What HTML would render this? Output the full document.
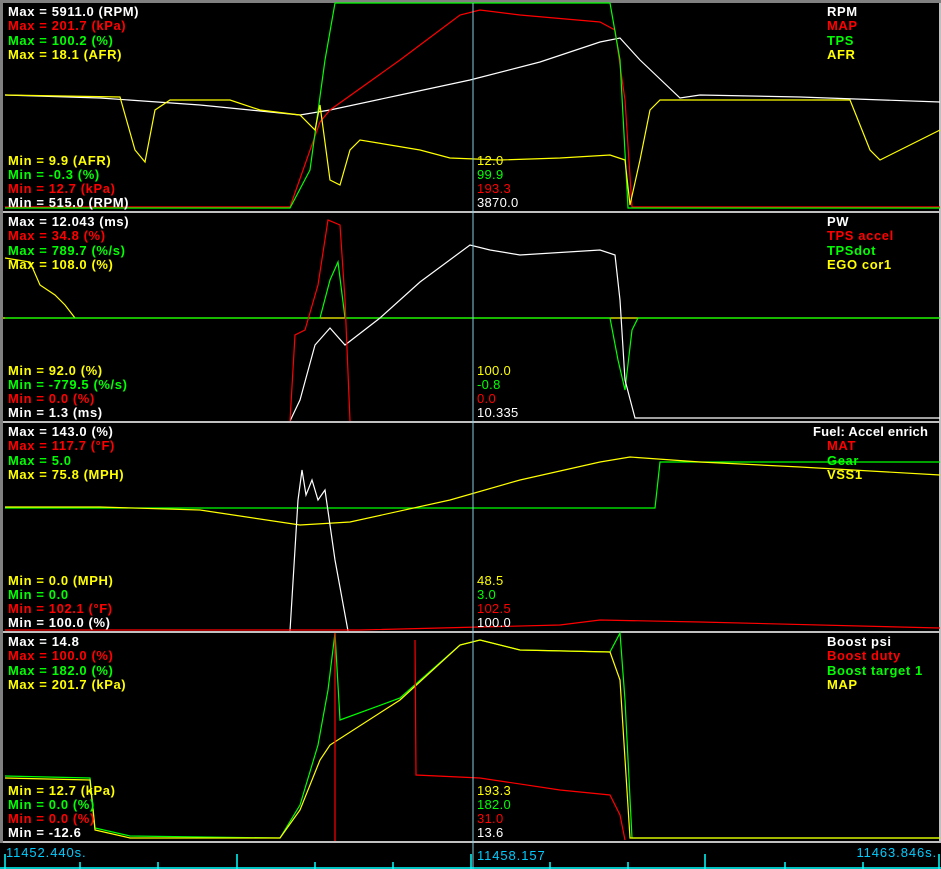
<!DOCTYPE html><html><head><style>
body{margin:0;background:#000;width:941px;height:869px;overflow:hidden}
svg{display:block}
text{font-family:"Liberation Sans",sans-serif;font-size:13px;letter-spacing:0.3px}
.b{font-weight:bold;letter-spacing:0.6px}
.ax{letter-spacing:0.9px}
</style></head><body>
<svg width="941" height="869" xmlns="http://www.w3.org/2000/svg">
<rect width="941" height="869" fill="#000"/>
<rect x="0" y="0" width="941" height="3" fill="#808080"/>
<rect x="0" y="0" width="3" height="843" fill="#808080"/>
<rect x="939" y="3" width="2" height="840" fill="#c0c0c0"/>
<g fill="#c0c0c0"><rect x="3" y="211" width="936" height="2"/><rect x="3" y="421" width="936" height="2"/><rect x="3" y="631" width="936" height="2"/><rect x="3" y="841" width="936" height="2"/></g>
<g fill="none" stroke-width="1.2">
<polyline stroke="#fff" points="5,95 100,98 200,105 300,115 330,110 400,95 470,80 540,62 600,42 620,38 640,60 680,98 700,95 800,97 940,102"/>
<polyline stroke="#f00" points="5,207 290,207 320,122 330,110 400,60 440,30 460,15 480,10 520,15 600,22 615,30 625,100 632,207 940,207"/>
<polyline stroke="#0f0" points="5,208 290,208 310,170 325,60 335,3 610,3 620,60 628,208 940,208"/>
<polyline stroke="#ff0" points="5,95 120,97 135,150 145,162 155,110 170,100 230,100 260,110 300,115 315,130 320,105 330,180 340,185 350,150 360,140 390,145 420,150 450,158 500,160 560,158 610,155 625,160 630,205 640,160 650,110 660,100 850,100 870,150 880,160 900,150 930,135 940,130"/>
<line stroke="#ff0" x1="3" y1="318" x2="939" y2="318"/>
<polyline stroke="#ff0" points="5,258 30,262 40,285 55,295 65,305 75,318"/>
<polyline stroke="#0f0" points="5,318 320,318 330,280 338,262 345,318 610,318 618,360 625,390 632,330 638,318 940,318"/>
<polyline stroke="#fff" points="290,421 300,400 315,345 330,328 345,345 380,318 420,282 470,245 490,250 520,255 600,250 615,255 620,300 625,380 635,418 940,418"/>
<polyline stroke="#f00" points="290,421 295,335 305,330 318,285 328,220 340,225 345,300 350,421"/>
<polyline stroke="#0f0" points="5,508 655,508 660,462 940,462"/>
<polyline stroke="#ff0" points="5,507 100,507 200,510 300,525 350,522 450,500 520,480 600,462 630,457 700,462 800,467 940,475"/>
<polyline stroke="#fff" points="290,631 298,500 302,470 306,495 312,480 318,500 325,490 335,560 348,631"/>
<polyline stroke="#f00" points="5,630 360,630 560,625 600,620 700,622 940,628"/>
<polyline stroke="#0f0" points="5,776 90,778 95,828 130,836 280,838 300,805 318,745 328,690 335,633 340,720 400,698 460,645 480,640 520,650 610,652 620,633 625,700 632,838 940,838"/>
<polyline stroke="#ff0" points="5,778 90,780 95,830 130,838 280,838 300,810 320,760 330,745 400,700 460,645 480,640 520,650 610,652 620,680 630,838 940,838"/>
<polyline stroke="#f00" points="335,633 335,841"/>
<polyline stroke="#f00" points="415,640 416,775 480,778 560,790 610,795 620,815 625,840"/>
</g>
<line x1="473" y1="3" x2="473" y2="869" stroke="#8cd" stroke-width="1"/>
<g stroke="#0ff" stroke-width="1.5">
<line x1="0" y1="868" x2="941" y2="868"/>
<line x1="5" y1="854" x2="5" y2="869"/><line x1="237" y1="854" x2="237" y2="869"/><line x1="471" y1="854" x2="471" y2="869"/><line x1="705" y1="854" x2="705" y2="869"/><line x1="939" y1="854" x2="939" y2="869"/>
<line x1="80" y1="862" x2="80" y2="869"/><line x1="158" y1="862" x2="158" y2="869"/><line x1="315" y1="862" x2="315" y2="869"/><line x1="393" y1="862" x2="393" y2="869"/><line x1="550" y1="862" x2="550" y2="869"/><line x1="628" y1="862" x2="628" y2="869"/><line x1="785" y1="862" x2="785" y2="869"/><line x1="863" y1="862" x2="863" y2="869"/>
</g>
<g fill="#0cf"><text class="ax" x="6" y="857">11452.440s.</text><text class="ax" x="477" y="860">11458.157</text><text class="ax" x="937" y="857" text-anchor="end">11463.846s.</text></g>
<g>
<text class="b" x="8" y="16" fill="#fff">Max = 5911.0 (RPM)</text>
<text class="b" x="8" y="30" fill="#f00">Max = 201.7 (kPa)</text>
<text class="b" x="8" y="45" fill="#0f0">Max = 100.2 (%)</text>
<text class="b" x="8" y="59" fill="#ff0">Max = 18.1 (AFR)</text>
<text class="b" x="8" y="165" fill="#ff0">Min = 9.9 (AFR)</text>
<text class="b" x="8" y="179" fill="#0f0">Min = -0.3 (%)</text>
<text class="b" x="8" y="193" fill="#f00">Min = 12.7 (kPa)</text>
<text class="b" x="8" y="207" fill="#fff">Min = 515.0 (RPM)</text>
<text class="b" x="827" y="16" fill="#fff">RPM</text>
<text class="b" x="827" y="30" fill="#f00">MAP</text>
<text class="b" x="827" y="45" fill="#0f0">TPS</text>
<text class="b" x="827" y="59" fill="#ff0">AFR</text>
<text class="b" x="8" y="226" fill="#fff">Max = 12.043 (ms)</text>
<text class="b" x="8" y="240" fill="#f00">Max = 34.8 (%)</text>
<text class="b" x="8" y="255" fill="#0f0">Max = 789.7 (%/s)</text>
<text class="b" x="8" y="269" fill="#ff0">Max = 108.0 (%)</text>
<text class="b" x="8" y="375" fill="#ff0">Min = 92.0 (%)</text>
<text class="b" x="8" y="389" fill="#0f0">Min = -779.5 (%/s)</text>
<text class="b" x="8" y="403" fill="#f00">Min = 0.0 (%)</text>
<text class="b" x="8" y="417" fill="#fff">Min = 1.3 (ms)</text>
<text class="b" x="827" y="226" fill="#fff">PW</text>
<text class="b" x="827" y="240" fill="#f00">TPS accel</text>
<text class="b" x="827" y="255" fill="#0f0">TPSdot</text>
<text class="b" x="827" y="269" fill="#ff0">EGO cor1</text>
<text class="b" x="8" y="436" fill="#fff">Max = 143.0 (%)</text>
<text class="b" x="8" y="450" fill="#f00">Max = 117.7 (°F)</text>
<text class="b" x="8" y="465" fill="#0f0">Max = 5.0</text>
<text class="b" x="8" y="479" fill="#ff0">Max = 75.8 (MPH)</text>
<text class="b" x="8" y="585" fill="#ff0">Min = 0.0 (MPH)</text>
<text class="b" x="8" y="599" fill="#0f0">Min = 0.0</text>
<text class="b" x="8" y="613" fill="#f00">Min = 102.1 (°F)</text>
<text class="b" x="8" y="627" fill="#fff">Min = 100.0 (%)</text>
<text class="b" x="813" y="436" fill="#fff" style="letter-spacing:0.2px">Fuel: Accel enrich</text>
<text class="b" x="827" y="450" fill="#f00">MAT</text>
<text class="b" x="827" y="465" fill="#0f0">Gear</text>
<text class="b" x="827" y="479" fill="#ff0">VSS1</text>
<text class="b" x="8" y="646" fill="#fff">Max = 14.8</text>
<text class="b" x="8" y="660" fill="#f00">Max = 100.0 (%)</text>
<text class="b" x="8" y="675" fill="#0f0">Max = 182.0 (%)</text>
<text class="b" x="8" y="689" fill="#ff0">Max = 201.7 (kPa)</text>
<text class="b" x="8" y="795" fill="#ff0">Min = 12.7 (kPa)</text>
<text class="b" x="8" y="809" fill="#0f0">Min = 0.0 (%)</text>
<text class="b" x="8" y="823" fill="#f00">Min = 0.0 (%)</text>
<text class="b" x="8" y="837" fill="#fff">Min = -12.6</text>
<text class="b" x="827" y="646" fill="#fff">Boost psi</text>
<text class="b" x="827" y="660" fill="#f00">Boost duty</text>
<text class="b" x="827" y="675" fill="#0f0">Boost target 1</text>
<text class="b" x="827" y="689" fill="#ff0">MAP</text>
</g>
<g>
<text x="477" y="165" fill="#ff0">12.0</text><text x="477" y="179" fill="#0f0">99.9</text><text x="477" y="193" fill="#f00">193.3</text><text x="477" y="207" fill="#fff">3870.0</text>
<text x="477" y="375" fill="#ff0">100.0</text><text x="477" y="389" fill="#0f0">-0.8</text><text x="477" y="403" fill="#f00">0.0</text><text x="477" y="417" fill="#fff">10.335</text>
<text x="477" y="585" fill="#ff0">48.5</text><text x="477" y="599" fill="#0f0">3.0</text><text x="477" y="613" fill="#f00">102.5</text><text x="477" y="627" fill="#fff">100.0</text>
<text x="477" y="795" fill="#ff0">193.3</text><text x="477" y="809" fill="#0f0">182.0</text><text x="477" y="823" fill="#f00">31.0</text><text x="477" y="837" fill="#fff">13.6</text>
</g>
</svg>
</body></html>
